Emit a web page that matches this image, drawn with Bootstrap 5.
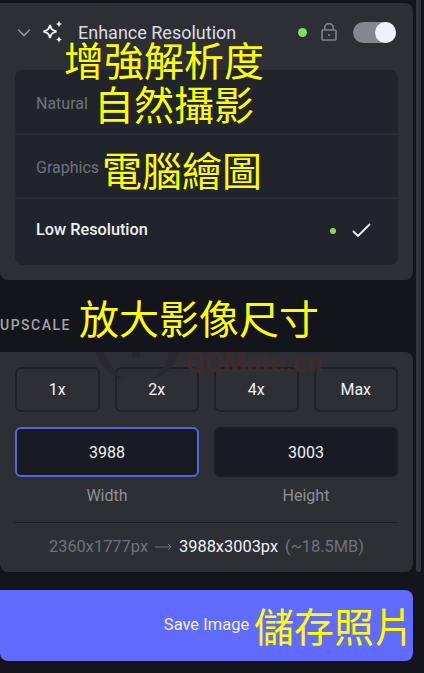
<!DOCTYPE html>
<html lang="en">
<head>
    <meta charset="UTF-8">
    <meta name="viewport" content="width=device-width, initial-scale=1.0">
    <title>Enhance Resolution</title>
    <link rel="stylesheet" href="https://cdn.jsdelivr.net/npm/bootstrap@5.3.0/dist/css/bootstrap.min.css">
    <style>
        html, body { height: 100%; }
        body { background: #14151a; font-family: Roboto, "Noto Sans CJK TC", sans-serif; color: #eef1f7; overflow: hidden; }
        .stage { position: relative; width: 424px; height: 673px; padding: 3px 11px 0 0; }
        .panel-box { background: #2e2f35; border-radius: 0 8px 8px 8px; }
        .enhance-box { height: 277px; padding: 0 15px; }
        .enhance-head { height: 67px; padding: 0 2px 9px 2px; font-size: 18px; color: #d9dde6; }
        .chev-ico { margin-right: 10px; }
        .spark-ico { margin-right: 13px; }
        .mode-list { background: #22242c; border-radius: 8px; height: 195px; }
        .mode-row { padding: 0 27px 0 21px; font-size: 16px; color: #6f737f; }
        .mode-row + .mode-row { border-top: 2px solid #2b2c33; }
        .mode-row.one { height: 63px; padding-top: 4px; }
        .mode-row.two { height: 64px; padding-top: 4px; }
        .mode-row.three { height: 68px; padding-bottom: 3px; color: #eef1f7; font-weight: 500; font-size: 16.3px; }
        .live-dot { width: 9px; height: 9px; border-radius: 50%; background: #84dc5e; }
        .live-dot.tiny { width: 6px; height: 6px; }
        .lock-ico { margin: 0 16px 0 14px; }
        .switch-track { width: 43px; height: 21px; border-radius: 11px; background: #848790; display: flex; justify-content: flex-end; }
        .switch-knob { width: 21px; height: 21px; border-radius: 50%; background: #eff2fa; }
        .section-name { height: 72px; padding-top: 18px; font-size: 14px; font-weight: 500; letter-spacing: 1.5px; color: #a1a4ad; }
        .upscale-box { height: 220px; padding: 15px 15px 0; }
        .size-row { gap: 15px; }
        .size-btn { flex: 1 1 0; height: 45px; border: 2px solid #212228; border-radius: 6px; background: transparent; color: #eef1f7; font-size: 16px; padding: 0; }
        .dim-row { gap: 15px; margin-top: 15px; }
        .dim-field { height: 50px; background: #191b23; border: 2px solid #1f2026; border-radius: 6px; color: #eef1f7; font-size: 16px; text-align: center; padding: 0; box-shadow: none; }
        .dim-field:focus, .dim-field.active-field { background: #191b23; color: #eef1f7; border-color: #5a63e0; box-shadow: none; }
        .field-cap { font-size: 16px; color: #8d9098; margin-top: 10px; line-height: 18px; }
        .rule-line { height: 1px; background: #1e1f24; margin: 17px 0 0 -1px; }
        .size-note { height: 48px; font-size: 16.4px; color: #6f727b; gap: 7px; }
        .size-note b { font-weight: 400; color: #f1f3f9; }
        .save-btn { margin-top: 18px; width: 100%; height: 71px; background: #626bff; border: 0; border-radius: 0 8px 8px 8px; color: #eef1ff; font-size: 16.500px; }
        .scroll-thumb { position: absolute; left: 416px; top: 0; width: 5px; height: 572px; background: #33353b; border-radius: 0 0 3px 3px; }
        .cap-text { position: absolute; color: #ffff00; font-family: "Noto Sans CJK TC", sans-serif; font-weight: 400; font-size: 40px; line-height: 1; white-space: nowrap; }
        .mark-text { position: absolute; left: 186px; top: 350px; font-size: 27px; font-weight: 700; color: #3e2b2e; line-height: 1; }
        .mark-logo { position: absolute; left: 95px; top: 352px; }
    </style>
</head>
<body>
    <div class="stage">

        <div class="panel-box enhance-box">
            <div class="enhance-head d-flex align-items-center">
                <svg class="chev-ico" width="14" height="9" viewBox="0 0 14 9" fill="none" stroke="#8e9199" stroke-width="1.700"><path d="M1 1.500l6 6 6-6"/></svg>
                <svg class="spark-ico" width="24" height="24" viewBox="0 0 24 24" fill="#f2f4f9"><path d="M9 5c.8 4.100 2.300 5.600 6.500 6.500C11.300 12.400 9.800 13.900 9 18c-.8-4.100-2.300-5.600-6.500-6.500C6.700 10.600 8.200 9.100 9 5z" fill="none" stroke="#f2f4f9" stroke-width="2"/><path d="M18 .5c.4 2.300 1.300 3.200 3.500 3.500-2.200.3-3.100 1.200-3.500 3.500-.4-2.300-1.300-3.200-3.500-3.500 2.200-.3 3.100-1.200 3.500-3.500zM18 16c.4 2.300 1.300 3.200 3.500 3.500-2.200.3-3.100 1.200-3.500 3.500-.4-2.300-1.300-3.200-3.500-3.500 2.200-.3 3.100-1.200 3.500-3.500z"/></svg>
                <span class="flex-grow-1">Enhance Resolution</span>
                <span class="live-dot"></span>
                <svg class="lock-ico" width="16" height="18" viewBox="0 0 16 18" fill="none" stroke="#80838c" stroke-width="1.600"><rect x="1" y="7" width="14" height="10" rx="1"/><path d="M3.800 7V4.800a4.200 4.200 0 0 1 8.400 0V7"/><path d="M8 11v2"/></svg>
                <span class="switch-track"><span class="switch-knob"></span></span>
            </div>
            <div class="mode-list">
                <div class="mode-row one d-flex align-items-center">Natural</div>
                <div class="mode-row two d-flex align-items-center">Graphics</div>
                <div class="mode-row three d-flex align-items-center">
                    <span class="flex-grow-1">Low Resolution</span>
                    <span class="live-dot tiny me-3"></span>
                    <svg width="19" height="15" viewBox="0 0 19 15" fill="none" stroke="#f2f4f9" stroke-width="1.800"><path d="M1 8l5 5L18 1"/></svg>
                </div>
            </div>
        </div>

        <div class="section-name d-flex align-items-center">UPSCALE</div>

        <div class="panel-box upscale-box">
            <div class="d-flex size-row">
                <button type="button" class="size-btn">1x</button>
                <button type="button" class="size-btn">2x</button>
                <button type="button" class="size-btn">4x</button>
                <button type="button" class="size-btn">Max</button>
            </div>
            <div class="d-flex dim-row">
                <div class="flex-fill w-50 text-center">
                    <input type="text" class="form-control dim-field active-field" value="3988">
                    <div class="field-cap">Width</div>
                </div>
                <div class="flex-fill w-50 text-center">
                    <input type="text" class="form-control dim-field" value="3003">
                    <div class="field-cap">Height</div>
                </div>
            </div>
            <div class="rule-line"></div>
            <div class="size-note d-flex align-items-center justify-content-center">
                <span>2360x1777px</span>
                <svg width="17" height="8" viewBox="0 0 17 8" fill="none" stroke="#6f727b"><path d="M0 4h16M13 1l3 3-3 3"/></svg>
                <b>3988x3003px</b>
                <span>(~18.5MB)</span>
            </div>
        </div>

        <button type="button" class="save-btn">Save Image</button>

        <div class="scroll-thumb"></div>
        <svg class="mark-logo" width="86" height="30" viewBox="0 0 86 30" fill="#29292f"><path d="M0 0h10c3 12 9 20 20 27C16 25 5 15 0 0zM56 28C66 20 72 11 74 0h11c-4 14-15 24-29 28z"/><circle cx="41" cy="3" r="4"/></svg>
        <span class="mark-text">QQMate.cn</span>
        <span class="cap-text" style="left:64px;top:39px">增強解析度</span>
        <span class="cap-text" style="left:94px;top:83px">自然攝影</span>
        <span class="cap-text" style="left:102px;top:149px">電腦繪圖</span>
        <span class="cap-text" style="left:79px;top:297px">放大影像尺寸</span>
        <span class="cap-text" style="left:254px;top:605px">儲存照片</span>
    </div>

    <script src="https://cdn.jsdelivr.net/npm/bootstrap@5.3.0/dist/js/bootstrap.bundle.min.js"></script>
</body>
</html>
